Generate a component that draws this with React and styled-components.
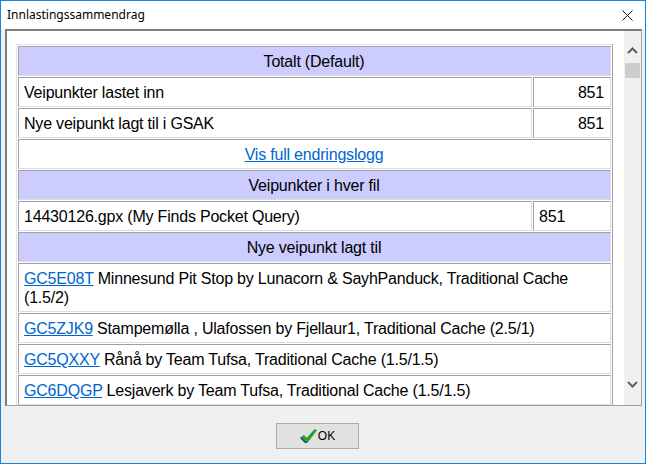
import React from "react";
import styled, { createGlobalStyle } from "styled-components";

const GlobalStyle = createGlobalStyle`
  html, body { margin: 0; padding: 0; background: #f0f0f0; overflow: hidden; }
  * { box-sizing: border-box; }
`;

const Window = styled.div`
  width: 646px;
  height: 464px;
  border: 1px solid #1883d7;
  background: #f0f0f0;
  display: flex;
  flex-direction: column;
`;

const TitleBar = styled.div`
  height: 28px;
  background: #ffffff;
  display: flex;
  align-items: center;
  justify-content: space-between;
  padding: 0 6px 0 6px;
  flex: none;
`;

const Title = styled.span`
  font-family: "Noto Sans", "Open Sans", sans-serif;
  font-size: 12px;
  color: #000;
  line-height: 16px;
`;

const CloseButton = styled.div`
  width: 24px;
  height: 20px;
  display: flex;
  align-items: center;
  justify-content: center;
`;

const Panel = styled.div`
  margin: 0 3px 0 4px;
  height: 377px;
  flex: none;
  border-style: solid;
  border-width: 2px 1px 1px 2px;
  border-color: #7c7c7c #a0a0a0 #a0a0a0 #7c7c7c;
  background: #ffffff;
  display: flex;
  overflow: hidden;
`;

const Viewport = styled.div`
  flex: 1;
  overflow: hidden;
  padding: 13px 0 0 9px;
`;

const Table = styled.table`
  width: 597px;
  border-collapse: separate;
  border-spacing: 1px;
  border-style: solid;
  border-width: 1px;
  border-color: #e3e3e3 #a0a0a0 #a0a0a0 #e3e3e3;
  font-family: "Liberation Sans", Arial, sans-serif;
  font-size: 16px;
  letter-spacing: -0.2px;
  color: #000;
`;

const Cell = styled.td`
  border-style: solid;
  border-width: 1px;
  border-color: #a0a0a0 #dcdcdc #dcdcdc #a0a0a0;
  padding: 5px 6px 4px 5px;
  line-height: 19px;
  text-align: ${(p) => p.$align || "left"};
  background: ${(p) => (p.$header ? "#ccccff" : "#ffffff")};
  vertical-align: top;
`;

const ValueCell = styled(Cell)`
  width: 78px;
`;

const Link = styled.a`
  color: #0066cc;
  text-decoration: underline;
  cursor: pointer;
`;

const ScrollBar = styled.div`
  width: 17px;
  flex: none;
  background: #f0f0f0;
  display: flex;
  flex-direction: column;
`;

const ArrowButton = styled.div`
  height: ${(p) => p.$h}px;
  padding-top: ${(p) => p.$pt || 0}px;
  display: flex;
  align-items: center;
  justify-content: center;
  flex: none;
`;

const Track = styled.div`
  flex: 1;
  display: flex;
  flex-direction: column;
  align-items: center;
`;

const Thumb = styled.div`
  width: 15px;
  height: 15px;
  background: #cdcdcd;
`;

const Footer = styled.div`
  flex: 1;
  padding: 17px 0 0 275px;
`;

const OkButton = styled.button`
  width: 83px;
  height: 26px;
  background: #e1e1e1;
  border: 1px solid #adadad;
  display: flex;
  align-items: center;
  justify-content: center;
  gap: 1px;
  padding: 0;
  font-family: "Liberation Sans", Arial, sans-serif;
  font-size: 12px;
  color: #000;
`;

const Chevron = ({ up }) => (
  <svg width="11" height="7" viewBox="0 0 11 7">
    <polyline
      points={up ? "1,6 5.5,1.5 10,6" : "1,1 5.5,5.5 10,1"}
      fill="none"
      stroke="#606060"
      strokeWidth="2"
    />
  </svg>
);

const CheckIcon = () => (
  <svg width="17" height="15" viewBox="0 0 17 15">
    <polygon points="0,9 3,7 6,10 14,1 16,2 7,14 5,14" fill="#2b2bb0" />
    <polygon points="1,8 4,6 7,9 15,0 17,1 8,13 6,13" fill="#1faa1f" />
  </svg>
);

const newPoints = [
  {
    code: "GC5E08T",
    text: "Minnesund Pit Stop by Lunacorn & SayhPanduck, Traditional Cache (1.5/2)",
  },
  { code: "GC5ZJK9", text: "Stampemølla , Ulafossen by Fjellaur1, Traditional Cache (2.5/1)" },
  { code: "GC5QXXY", text: "Rånå by Team Tufsa, Traditional Cache (1.5/1.5)" },
  { code: "GC6DQGP", text: "Lesjaverk by Team Tufsa, Traditional Cache (1.5/1.5)" },
];

function ArrowBtnDown() {
  return (
    <ArrowButton $h={42}>
      <Chevron />
    </ArrowButton>
  );
}

export default function App() {
  return (
    <>
      <GlobalStyle />
      <Window>
        <TitleBar>
          <Title>Innlastingssammendrag</Title>
          <CloseButton>
            <svg width="11" height="11" viewBox="0 0 11 11">
              <path d="M0.5 0.5 L10.5 10.5 M10.5 0.5 L0.5 10.5" stroke="#111" strokeWidth="1" />
            </svg>
          </CloseButton>
        </TitleBar>
        <Panel>
          <Viewport>
            <Table>
              <tbody>
                <tr>
                  <Cell colSpan={2} $header $align="center">Totalt (Default)</Cell>
                </tr>
                <tr>
                  <Cell>Veipunkter lastet inn</Cell>
                  <ValueCell $align="right">851</ValueCell>
                </tr>
                <tr>
                  <Cell>Nye veipunkt lagt til i GSAK</Cell>
                  <ValueCell $align="right">851</ValueCell>
                </tr>
                <tr>
                  <Cell colSpan={2} $align="center">
                    <Link>Vis full endringslogg</Link>
                  </Cell>
                </tr>
                <tr>
                  <Cell colSpan={2} $header $align="center">Veipunkter i hver fil</Cell>
                </tr>
                <tr>
                  <Cell>14430126.gpx (My Finds Pocket Query)</Cell>
                  <ValueCell>851</ValueCell>
                </tr>
                <tr>
                  <Cell colSpan={2} $header $align="center">Nye veipunkt lagt til</Cell>
                </tr>
                {newPoints.map((p) => (
                  <tr key={p.code}>
                    <Cell colSpan={2}>
                      <Link>{p.code}</Link> {p.text}
                    </Cell>
                  </tr>
                ))}
              </tbody>
            </Table>
          </Viewport>
          <ScrollBar>
            <ArrowButton $h={32} $pt={6}>
              <Chevron up />
            </ArrowButton>
            <Track>
              <Thumb />
            </Track>
            <ArrowBtnDown />
          </ScrollBar>
        </Panel>
        <Footer>
          <OkButton>
            <CheckIcon />
            OK
          </OkButton>
        </Footer>
      </Window>
    </>
  );
}
